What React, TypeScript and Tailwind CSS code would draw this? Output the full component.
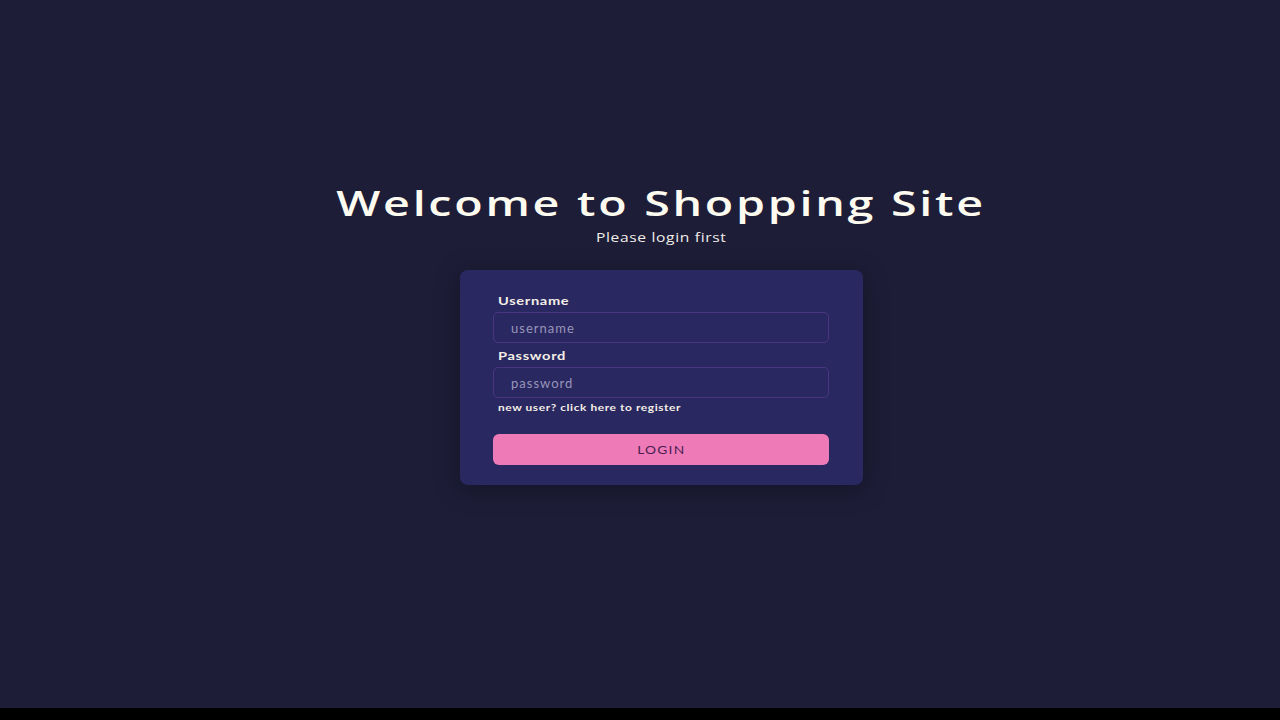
import React from "react";

export default function App() {
  return (
    <div className="w-[1280px] h-[720px] flex flex-col bg-black overflow-hidden">
      <div className="h-[708px] bg-[#1d1d38] flex flex-col items-center pt-[181px] pl-[43px]">
        <h1
          className="text-[34px] leading-[44px] text-[#fdfbf0] font-semibold tracking-[2px] scale-x-[1.37] whitespace-nowrap"
          style={{ fontFamily: '"Open Sans", sans-serif' }}
        >
          Welcome to Shopping Site
        </h1>
        <p
          className="mt-[4px] text-[12px] leading-[18px] text-[#f3efe8] font-medium tracking-[0.5px] scale-x-[1.3] whitespace-nowrap"
          style={{ fontFamily: '"Open Sans", sans-serif' }}
        >
          Please login first
        </p>
        <div
          className="mt-[23px] w-[403px] h-[215px] rounded-[8px] bg-[#2a2861] pl-[33px] pr-[34px] pt-[23px] flex flex-col shadow-[0_4px_24px_rgba(0,0,0,0.35)]"
          style={{ fontFamily: "Lato, sans-serif" }}
        >
          <label className="self-start ml-[5px] origin-left scale-x-[1.33] text-[11px] leading-[16px] font-bold tracking-[0.5px] text-[#f4efe6]">
            Username
          </label>
          <input
            placeholder="username"
            className="mt-[3px] h-[31px] w-full rounded-[5px] border border-[#4a3680] bg-transparent px-[17px] text-[13px] tracking-[1px] text-[#cfcde0] placeholder:text-[#9896ba] outline-none"
          />
          <label className="mt-[5px] self-start ml-[5px] origin-left scale-x-[1.33] text-[11px] leading-[16px] font-bold tracking-[0.5px] text-[#f4efe6]">
            Password
          </label>
          <input
            placeholder="password"
            type="password"
            className="mt-[3px] h-[31px] w-full rounded-[5px] border border-[#4a3680] bg-transparent px-[17px] text-[13px] tracking-[1px] text-[#cfcde0] placeholder:text-[#9896ba] outline-none"
          />
          <a className="mt-[2px] self-start ml-[5px] origin-left scale-x-[1.19] text-[10px] leading-[14px] font-bold tracking-[0.5px] text-[#f4efe6] whitespace-nowrap">
            new user? click here to register
          </a>
          <button className="mt-[20px] h-[31px] w-full rounded-[6px] bg-[#ee7ab8] text-[#4a1e52] flex items-center justify-center">
            <span className="inline-block scale-x-[1.25] text-[11px] leading-[12px] tracking-[1px]">LOGIN</span>
          </button>
        </div>
      </div>
    </div>
  );
}
